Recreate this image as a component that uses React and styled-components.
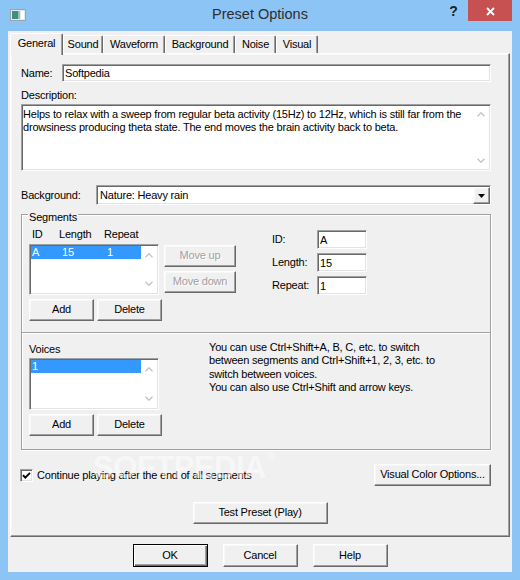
import React from "react";
import styled, { createGlobalStyle, css } from "styled-components";

const Global = createGlobalStyle`
  html, body { margin: 0; padding: 0; background: #8cc5f5; }
  body {
    font-family: "Liberation Sans", Arial, sans-serif;
    font-size: 11px;
    line-height: 13px;
    letter-spacing: -0.2px;
    color: #000;
  }
  * { box-sizing: border-box; }
`;

const sunken = css`
  border: 1px solid;
  border-color: #a0a0a0 #ffffff #ffffff #a0a0a0;
  box-shadow: inset 1px 1px 0 #696969, inset -1px -1px 0 #e3e3e3;
`;

const raised = css`
  border: 1px solid;
  border-color: #ffffff #696969 #696969 #ffffff;
  box-shadow: inset -1px -1px 0 #a0a0a0, inset 1px 1px 0 #f8f8f8;
`;

const Window = styled.div`
  width: 520px;
  height: 580px;
  background: #8cc5f5;
  display: flex;
  flex-direction: column;
`;

const TitleBar = styled.header`
  height: 31px;
  flex-shrink: 0;
  display: grid;
  grid-template-columns: 1fr auto 1fr;
  align-items: start;
`;

const AppIcon = styled.svg`
  margin: 9px 0 0 10px;
  display: block;
`;

const TitleText = styled.h1`
  margin: 0;
  padding-top: 4px;
  font: 400 14.5px/20px "Liberation Sans", Arial, sans-serif;
  letter-spacing: 0;
  color: #2d2d2d;
`;

const Controls = styled.div`
  display: flex;
  justify-content: flex-end;
  padding-right: 8px;
`;

const HelpButton = styled.div`
  width: 29px;
  height: 21px;
  display: flex;
  align-items: center;
  justify-content: center;
  font: 700 14px/1 "Liberation Sans", Arial, sans-serif;
  color: #1e1e1e;
  letter-spacing: 0;
`;

const CloseButton = styled.div`
  width: 44px;
  height: 21px;
  background: #c75050;
  display: flex;
  align-items: center;
  justify-content: center;
  padding-top: 2px;
`;

const Client = styled.div`
  flex: 1;
  margin: 0 8px 8px;
  background: #f0f0f0;
  display: flex;
  flex-direction: column;
  padding: 2px 2px 0;
`;

const TabStrip = styled.nav`
  height: 20px;
  display: flex;
  align-items: flex-start;
`;

const Tab = styled.div`
  position: relative;
  z-index: ${(p) => (p.$active ? 2 : 1)};
  width: ${(p) => p.$w}px;
  height: ${(p) => (p.$active ? 22 : 18)}px;
  margin-top: ${(p) => (p.$active ? 0 : 2)}px;
  background: #f0f0f0;
  border-top: 1px solid #ffffff;
  border-left: 1px solid #ffffff;
  border-right: 1px solid #696969;
  border-radius: 2px 2px 0 0;
  box-shadow: inset -1px 0 0 #a0a0a0;
  display: flex;
  align-items: center;
  justify-content: center;
  padding-bottom: ${(p) => (p.$active ? 2 : 0)}px;
`;

const Panel = styled.section`
  position: relative;
  height: 484px;
  ${raised};
  padding: 10px 18px 0 10px;
  display: flex;
  flex-direction: column;
`;

const FieldRow = styled.div`
  display: flex;
  align-items: center;
  margin-top: ${(p) => p.$mt || 0}px;
`;

const FieldLabel = styled.label`
  width: ${(p) => p.$w}px;
  flex-shrink: 0;
`;

const TextInput = styled.input`
  ${sunken};
  height: ${(p) => p.$h || 18}px;
  width: ${(p) => (p.$w ? `${p.$w}px` : "auto")};
  flex: ${(p) => (p.$w ? "none" : "1")};
  min-width: 0;
  background: #fff;
  padding: 0 2px 0 2px;
  margin: 0;
  font: inherit;
  letter-spacing: inherit;
  color: #000;
  outline: none;
`;

const Caption = styled.div`
  margin-top: ${(p) => p.$mt || 0}px;
  height: 13px;
`;

const TextArea = styled.div`
  ${sunken};
  margin-top: 2px;
  height: 67px;
  background: #fff;
  display: flex;
`;

const AreaText = styled.p`
  flex: 1;
  margin: 0;
  padding: 3px 4px 0 1px;
  line-height: 13.3px;
`;

const ScrollBar = styled.div`
  width: 17px;
  flex-shrink: 0;
  display: flex;
  flex-direction: column;
  justify-content: space-between;
  padding: 1px 1px 1px 0;
`;

const ArrowBox = styled.div`
  height: 17px;
  display: flex;
  align-items: center;
  justify-content: center;
`;

const Select = styled.div`
  ${sunken};
  flex: 1;
  height: 20px;
  background: #fff;
  display: flex;
  align-items: stretch;
  padding: 1px 0 0 3px;
`;

const SelectValue = styled.span`
  flex: 1;
  display: flex;
  align-items: center;
  padding-bottom: 1px;
`;

const DropButton = styled.div`
  width: 17px;
  ${raised};
  background: #f0f0f0;
  display: flex;
  align-items: center;
  justify-content: center;
`;

const GroupBox = styled.fieldset`
  position: relative;
  margin: 9px 0 0;
  padding: 0;
  min-width: 0;
  height: 236px;
  border: 1px solid #a0a0a0;
  box-shadow: 1px 1px 0 #ffffff, inset 1px 1px 0 #ffffff;
  display: flex;
  flex-direction: column;
`;

const Legend = styled.span`
  position: absolute;
  top: -4px;
  left: 6px;
  padding: 0 1px;
  background: #f0f0f0;
  line-height: 13px;
`;

const Section = styled.div`
  height: ${(p) => p.$h}px;
  padding: ${(p) => p.$pt}px 0 0 7px;
  display: flex;
  align-items: flex-start;
`;

const Separator = styled.hr`
  margin: 0;
  height: 2px;
  border: 0;
  border-top: 1px solid #a0a0a0;
  border-bottom: 1px solid #ffffff;
`;

const Column = styled.div`
  width: ${(p) => (p.$w ? `${p.$w}px` : "auto")};
  margin-left: ${(p) => p.$ml || 0}px;
  padding-top: ${(p) => p.$pt || 0}px;
  display: flex;
  flex-direction: column;
  gap: ${(p) => p.$gap || 0}px;
  flex-shrink: 0;
`;

const ColHeader = styled.div`
  display: grid;
  grid-template-columns: 27px 45px 1fr;
  padding-left: 3px;
  height: 13px;
`;

const ListRow = styled.div`
  display: flex;
  margin-top: ${(p) => p.$mt || 0}px;
`;

const ListBox = styled.div`
  ${sunken};
  width: 130px;
  height: ${(p) => p.$h}px;
  background: #fff;
  padding: 1px 0 1px 1px;
  display: flex;
`;

const ListItems = styled.div`
  flex: 1;
`;

const ListItem = styled.div`
  height: 13px;
  display: grid;
  grid-template-columns: 30px 45px 1fr;
  padding-left: 1px;
  background: ${(p) => (p.$selected ? "#3399ff" : "transparent")};
  color: ${(p) => (p.$selected ? "#ffffff" : "#000")};
  line-height: 13px;
`;

const Button = styled.button`
  width: ${(p) => p.$w}px;
  height: ${(p) => p.$h || 22}px;
  margin: 0;
  padding: 0 0 1px;
  background: #f0f0f0;
  font: inherit;
  letter-spacing: inherit;
  color: ${(p) => (p.disabled ? "#a0a0a0" : "#000")};
  text-shadow: ${(p) => (p.disabled ? "1px 1px 0 #ffffff" : "none")};
  flex-shrink: 0;
  ${(p) =>
    p.$default
      ? css`
          border: 1px solid #000;
          box-shadow: inset 1px 1px 0 #ffffff, inset -1px -1px 0 #696969, inset -2px -2px 0 #a0a0a0;
        `
      : raised};
`;

const MoveColumn = styled.div`
  margin-left: 5px;
  padding-top: 1px;
  display: flex;
  flex-direction: column;
  gap: 4px;
`;

const ButtonPair = styled.div`
  display: flex;
  gap: 3px;
  margin-top: 4px;
`;

const FieldLine = styled.div`
  display: flex;
  align-items: center;
`;

const InfoText = styled.p`
  margin: -2px 0 0 47px;
  line-height: 13.4px;
`;

const CheckRow = styled.div`
  margin-top: 14px;
  height: 22px;
  display: flex;
  align-items: center;
`;

const CheckBox = styled.span`
  ${sunken};
  width: 13px;
  height: 13px;
  background: #fff;
  display: flex;
  align-items: center;
  justify-content: center;
  margin-right: 4px;
  margin-left: -1px;
`;

const PushRight = styled.div`
  margin-left: auto;
`;

const CenterRow = styled.div`
  display: flex;
  justify-content: center;
  gap: ${(p) => p.$gap || 0}px;
  margin-top: ${(p) => p.$mt || 0}px;
  padding-left: ${(p) => p.$pl || 0}px;
`;

const Watermark = styled.div`
  position: absolute;
  left: 82px;
  top: 398px;
  font: 700 31px/1 "Liberation Sans", Arial, sans-serif;
  letter-spacing: -0.5px;
  color: rgba(255, 255, 255, 0.5);
  pointer-events: none;
  sup {
    font-size: 10px;
    vertical-align: top;
    margin-left: 2px;
  }
`;

const Chevron = ({ down }) => (
  <svg width="8" height="5" viewBox="0 0 8 5">
    <polyline
      points={down ? "0.5,0.8 4,4.2 7.5,0.8" : "0.5,4.2 4,0.8 7.5,4.2"}
      fill="none"
      stroke="#c2c2c2"
      strokeWidth="1.3"
    />
  </svg>
);

const Scroll = () => (
  <ScrollBar>
    <ArrowBox>
      <Chevron />
    </ArrowBox>
    <ArrowBox>
      <Chevron down />
    </ArrowBox>
  </ScrollBar>
);

const tabs = [
  ["General", 53],
  ["Sound", 40],
  ["Waveform", 62],
  ["Background", 70],
  ["Noise", 41],
  ["Visual", 42],
];

export default function App() {
  return (
    <>
      <Global />
      <Window>
        <TitleBar>
          <AppIcon width="16" height="12" viewBox="0 0 16 12">
            <rect x="0.5" y="0.5" width="15" height="11" fill="#e6eaec" stroke="#9aa4aa" />
            <rect x="2" y="2" width="6" height="8" fill="#3f8f80" />
            <rect x="8" y="2" width="2" height="8" fill="#8fc2bb" />
            <rect x="11" y="2" width="3" height="8" fill="#ffffff" />
          </AppIcon>
          <TitleText>Preset Options</TitleText>
          <Controls>
            <HelpButton>?</HelpButton>
            <CloseButton>
              <svg width="9" height="9" viewBox="0 0 9 9">
                <path d="M1 1 L8 8 M8 1 L1 8" stroke="#fff" strokeWidth="1.8" />
              </svg>
            </CloseButton>
          </Controls>
        </TitleBar>
        <Client>
          <TabStrip>
            {tabs.map(([name, w], i) => (
              <Tab key={name} $w={w} $active={i === 0}>
                {name}
              </Tab>
            ))}
          </TabStrip>
          <Panel>
            <FieldRow>
              <FieldLabel $w={41}>Name:</FieldLabel>
              <TextInput readOnly defaultValue="Softpedia" />
            </FieldRow>
            <Caption $mt={7}>Description:</Caption>
            <TextArea>
              <AreaText>
                Helps to relax with a sweep from regular beta activity (15Hz) to 12Hz, which is still far from the
                <br />
                drowsiness producing theta state. The end moves the brain activity back to beta.
              </AreaText>
              <Scroll />
            </TextArea>
            <FieldRow $mt={14}>
              <FieldLabel $w={75}>Background:</FieldLabel>
              <Select>
                <SelectValue>Nature: Heavy rain</SelectValue>
                <DropButton>
                  <svg width="7" height="4" viewBox="0 0 7 4">
                    <polygon points="0,0 7,0 3.5,4" fill="#000" />
                  </svg>
                </DropButton>
              </Select>
            </FieldRow>
            <GroupBox>
              <Legend>Segments</Legend>
              <Section $h={117} $pt={13}>
                <Column>
                  <ColHeader>
                    <span>ID</span>
                    <span>Length</span>
                    <span>Repeat</span>
                  </ColHeader>
                  <ListRow $mt={3}>
                    <ListBox $h={51}>
                      <ListItems>
                        <ListItem $selected>
                          <span>A</span>
                          <span>15</span>
                          <span>1</span>
                        </ListItem>
                      </ListItems>
                      <Scroll />
                    </ListBox>
                    <MoveColumn>
                      <Button $w={72} disabled>
                        Move up
                      </Button>
                      <Button $w={72} disabled>
                        Move down
                      </Button>
                    </MoveColumn>
                  </ListRow>
                  <ButtonPair>
                    <Button $w={65}>Add</Button>
                    <Button $w={65}>Delete</Button>
                  </ButtonPair>
                </Column>
                <Column $ml={36} $pt={2} $gap={4}>
                  <FieldLine>
                    <FieldLabel $w={45}>ID:</FieldLabel>
                    <TextInput readOnly defaultValue="A" $w={50} $h={19} />
                  </FieldLine>
                  <FieldLine>
                    <FieldLabel $w={45}>Length:</FieldLabel>
                    <TextInput readOnly defaultValue="15" $w={50} $h={19} />
                  </FieldLine>
                  <FieldLine>
                    <FieldLabel $w={45}>Repeat:</FieldLabel>
                    <TextInput readOnly defaultValue="1" $w={50} $h={19} />
                  </FieldLine>
                </Column>
              </Section>
              <Separator />
              <Section $h={115} $pt={9}>
                <Column $w={133}>
                  <Caption>Voices</Caption>
                  <ListRow $mt={2}>
                    <ListBox $h={52}>
                      <ListItems>
                        <ListItem $selected>
                          <span>1</span>
                        </ListItem>
                      </ListItems>
                      <Scroll />
                    </ListBox>
                  </ListRow>
                  <ButtonPair>
                    <Button $w={65}>Add</Button>
                    <Button $w={65}>Delete</Button>
                  </ButtonPair>
                </Column>
                <InfoText>
                  You can use Ctrl+Shift+A, B, C, etc. to switch
                  <br />
                  between segments and Ctrl+Shift+1, 2, 3, etc. to
                  <br />
                  switch between voices.
                  <br />
                  You can also use Ctrl+Shift and arrow keys.
                </InfoText>
              </Section>
            </GroupBox>
            <CheckRow>
              <CheckBox>
                <svg width="9" height="9" viewBox="0 0 9 9">
                  <path d="M1 4.2 L3.3 6.6 L8 1.8" fill="none" stroke="#000" strokeWidth="1.9" />
                </svg>
              </CheckBox>
              <span>Continue playing after the end of all segments</span>
              <PushRight>
                <Button $w={117}>Visual Color Options...</Button>
              </PushRight>
            </CheckRow>
            <CenterRow $mt={16} $pl={8}>
              <Button $w={135}>Test Preset (Play)</Button>
            </CenterRow>
            <Watermark>
              SOFTPEDIA<sup>®</sup>
            </Watermark>
          </Panel>
          <CenterRow $mt={7} $gap={15}>
            <Button $w={75} $h={23} $default>
              OK
            </Button>
            <Button $w={75} $h={23}>
              Cancel
            </Button>
            <Button $w={75} $h={23}>
              Help
            </Button>
          </CenterRow>
        </Client>
      </Window>
    </>
  );
}
